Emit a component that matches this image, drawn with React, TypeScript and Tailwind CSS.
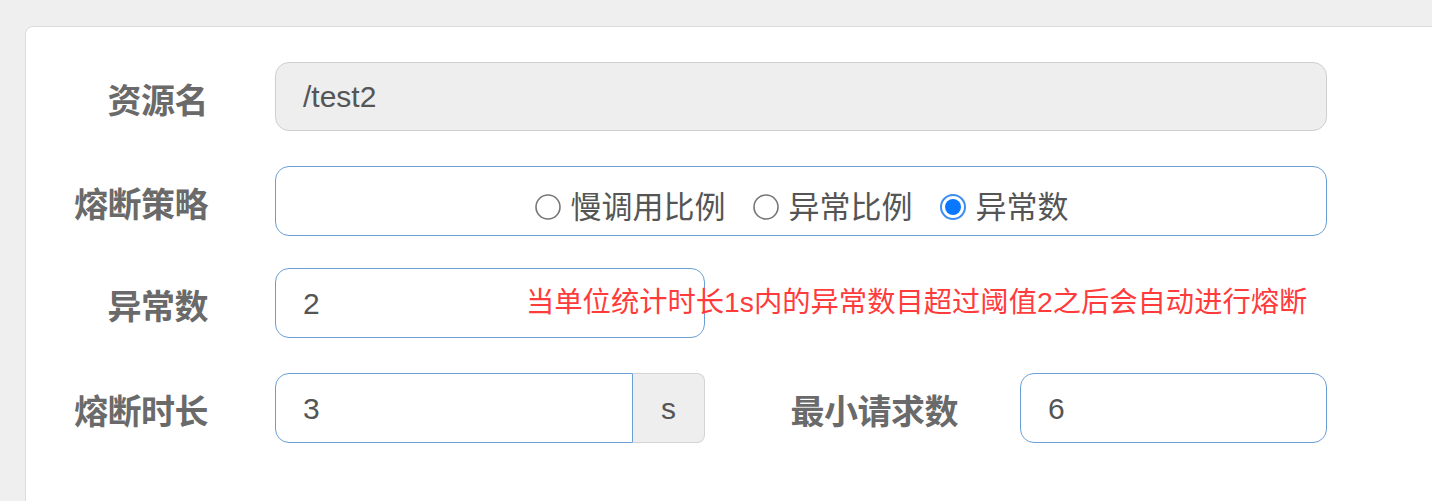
import React from "react";

const labelCls =
  "shrink-0 pt-[8px] text-right text-[34px] font-bold leading-none text-[#6a6a6a] tracking-[-0.5px]";
const cjk = { fontFamily: '"Liberation Sans", "Noto Sans CJK SC", sans-serif' };

function Radio({ checked, label }: { checked?: boolean; label: string }) {
  return (
    <label className="flex items-center">
      <svg width="28" height="28" viewBox="0 0 28 28" className="mr-[9px]">
        {checked ? (
          <>
            <circle cx="14" cy="14" r="12" fill="#fff" stroke="#3b8cf5" strokeWidth="2" />
            <circle cx="14" cy="14" r="8" fill="#0a77ff" />
          </>
        ) : (
          <circle cx="14" cy="14" r="12" fill="#fff" stroke="#767676" strokeWidth="1.6" />
        )}
      </svg>
      <span className="text-[31px] leading-none text-[#555]">{label}</span>
    </label>
  );
}

export default function App() {
  return (
    <div className="h-[501px] w-[1432px] overflow-hidden bg-[#efefef] pl-[25px] pt-[26px]" style={cjk}>
      <div className="h-[520px] w-[1460px] rounded-tl-[8px] border border-[#dcdcdc] bg-white pt-[35px]">
        {/* 资源名 */}
        <div className="flex items-center">
          <div className={`${labelCls} w-[182px]`}>资源名</div>
          <div className="ml-[67px] flex h-[69px] w-[1052px] items-center rounded-[14px] border border-[#cfcfcf] bg-[#eeeeee] pl-[27px] text-[30px] text-[#555]">
            /test2
          </div>
        </div>

        {/* 熔断策略 */}
        <div className="mt-[35px] flex items-center">
          <div className={`${labelCls} w-[182px]`}>熔断策略</div>
          <div className="ml-[67px] flex h-[70px] w-[1052px] items-center justify-center gap-[26px] rounded-[14px] border border-[#6a9fd4] bg-white pt-[12px]">
            <Radio label="慢调用比例" />
            <Radio label="异常比例" />
            <Radio checked label="异常数" />
          </div>
        </div>

        {/* 异常数 */}
        <div className="relative mt-[32px] flex items-center">
          <div className={`${labelCls} w-[182px]`}>异常数</div>
          <div className="ml-[67px] flex h-[70px] w-[430px] items-center rounded-[14px] border border-[#6a9fd4] bg-white pl-[27px] text-[30px] text-[#555]">
            2
          </div>
          <span className="absolute left-[500px] top-[16px] whitespace-nowrap text-[28.3px] leading-[36px] text-[#ff3b3b]">
            当单位统计时长1s内的异常数目超过阈值2之后会自动进行熔断
          </span>
        </div>

        {/* 熔断时长 / 最小请求数 */}
        <div className="mt-[35px] flex items-center">
          <div className={`${labelCls} w-[182px]`}>熔断时长</div>
          <div className="ml-[67px] flex h-[70px] w-[430px]">
            <div className="flex flex-1 items-center rounded-l-[14px] border border-[#6a9fd4] bg-white pl-[27px] text-[30px] text-[#555]">
              3
            </div>
            <div className="flex w-[72px] items-center justify-center rounded-r-[8px] border border-l-0 border-[#d4d4d4] bg-[#eeeeee] text-[30px] text-[#555]">
              s
            </div>
          </div>
          <div className={`${labelCls} w-[253px]`}>最小请求数</div>
          <div className="ml-[62px] flex h-[70px] w-[307px] items-center rounded-[14px] border border-[#6a9fd4] bg-white pl-[27px] text-[30px] text-[#555]">
            6
          </div>
        </div>
      </div>
    </div>
  );
}
